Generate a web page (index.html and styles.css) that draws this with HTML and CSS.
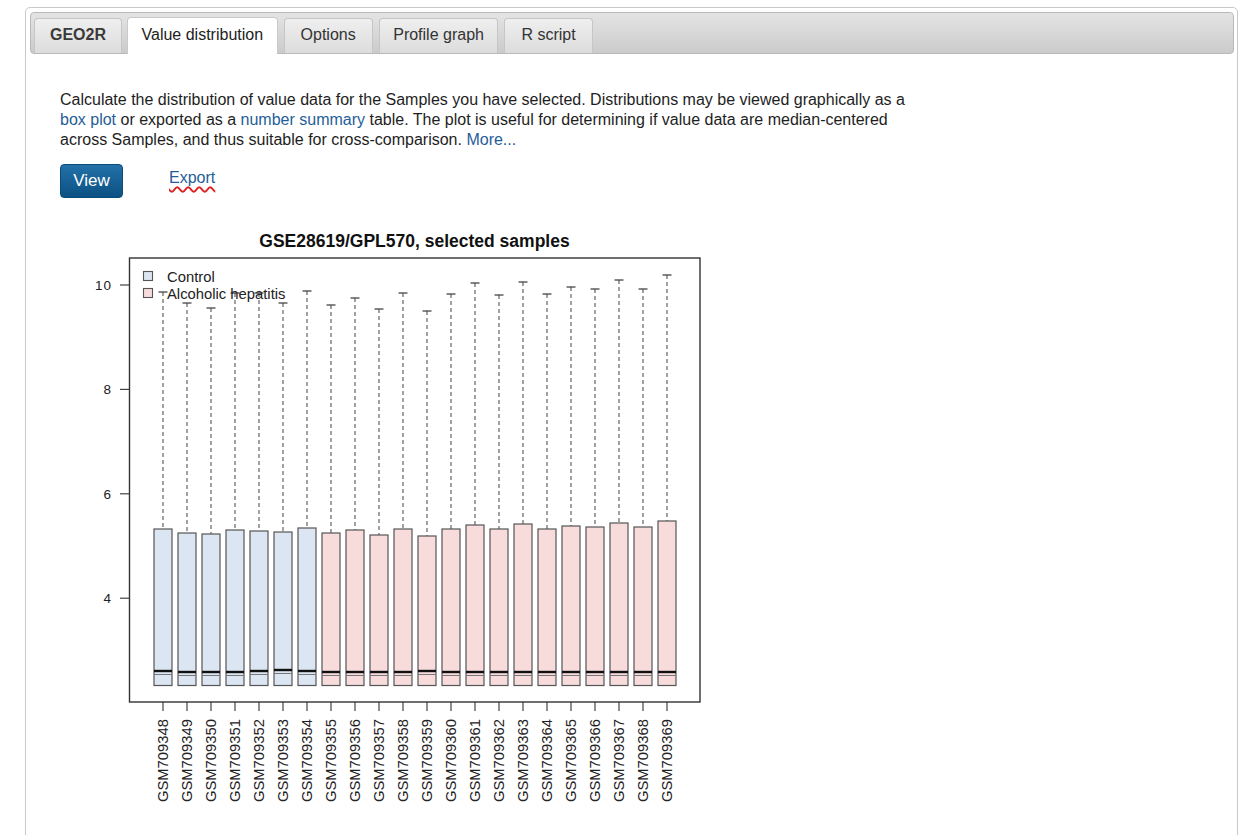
FILE: index.html
```html
<!DOCTYPE html>
<html>
<head>
<meta charset="utf-8">
<title>GEO2R - Value distribution</title>
<link rel="stylesheet" href="styles.css">
</head>
<body>
<div class="panel">
  <div class="tabbar">
    <div class="tab tab-bold">GEO2R</div>
    <div class="tab tab-active">Value distribution</div>
    <div class="tab tab-wide">Options</div>
    <div class="tab tab-mid">Profile graph</div>
    <div class="tab tab-wide">R script</div>
  </div>
  <div class="content">
    <p class="intro">Calculate the distribution of value data for the Samples you have selected. Distributions may be viewed graphically as a <a href="#">box plot</a> or exported as a <a href="#">number summary</a> table. The plot is useful for determining if value data are median-centered across Samples, and thus suitable for cross-comparison. <a href="#">More...</a></p>
    <div class="actions">
      <button class="btn-view">View</button>
      <a class="export" href="#">Export</a>
    </div>
    <svg class="chart" width="660" height="600" viewBox="60 222 660 600" xmlns="http://www.w3.org/2000/svg">
      <text class="title" x="414.5" y="246" text-anchor="middle">GSE28619/GPL570, selected samples</text>
      <!-- y axis -->
      <line class="axis" x1="120" x2="129" y1="284" y2="284"/>
      <line class="axis" x1="120" x2="129" y1="388.4" y2="388.4"/>
      <line class="axis" x1="120" x2="129" y1="492.8" y2="492.8"/>
      <line class="axis" x1="120" x2="129" y1="597.2" y2="597.2"/>
      <text class="yl" x="112" y="289">10</text>
      <text class="yl" x="112" y="393.4">8</text>
      <text class="yl" x="112" y="497.8">6</text>
      <text class="yl" x="112" y="602.2">4</text>

      <g transform="translate(163 0)"><line class="wh" y1="291" y2="528"/><line class="cap" x1="-4.5" x2="4.5" y1="291" y2="291"/><rect class="bx ctl" x="-9" y="528" width="18" height="156.5"/><line class="lq" x1="-9" x2="9" y1="673.5" y2="673.5"/><line class="med" x1="-9" x2="9" y1="670" y2="670"/><line class="tk" y1="701" y2="710"/><text class="xl" transform="translate(5 718) rotate(-90)">GSM709348</text></g>
      <g transform="translate(187 0)"><line class="wh" y1="302" y2="532"/><line class="cap" x1="-4.5" x2="4.5" y1="302" y2="302"/><rect class="bx ctl" x="-9" y="532" width="18" height="152.5"/><line class="lq" x1="-9" x2="9" y1="674.5" y2="674.5"/><line class="med" x1="-9" x2="9" y1="671" y2="671"/><line class="tk" y1="701" y2="710"/><text class="xl" transform="translate(5 718) rotate(-90)">GSM709349</text></g>
      <g transform="translate(211 0)"><line class="wh" y1="307" y2="533"/><line class="cap" x1="-4.5" x2="4.5" y1="307" y2="307"/><rect class="bx ctl" x="-9" y="533" width="18" height="151.5"/><line class="lq" x1="-9" x2="9" y1="674.5" y2="674.5"/><line class="med" x1="-9" x2="9" y1="671" y2="671"/><line class="tk" y1="701" y2="710"/><text class="xl" transform="translate(5 718) rotate(-90)">GSM709350</text></g>
      <g transform="translate(235 0)"><line class="wh" y1="292" y2="529"/><line class="cap" x1="-4.5" x2="4.5" y1="292" y2="292"/><rect class="bx ctl" x="-9" y="529" width="18" height="155.5"/><line class="lq" x1="-9" x2="9" y1="674.5" y2="674.5"/><line class="med" x1="-9" x2="9" y1="671" y2="671"/><line class="tk" y1="701" y2="710"/><text class="xl" transform="translate(5 718) rotate(-90)">GSM709351</text></g>
      <g transform="translate(259 0)"><line class="wh" y1="292" y2="530"/><line class="cap" x1="-4.5" x2="4.5" y1="292" y2="292"/><rect class="bx ctl" x="-9" y="530" width="18" height="154.5"/><line class="lq" x1="-9" x2="9" y1="673.5" y2="673.5"/><line class="med" x1="-9" x2="9" y1="670" y2="670"/><line class="tk" y1="701" y2="710"/><text class="xl" transform="translate(5 718) rotate(-90)">GSM709352</text></g>
      <g transform="translate(283 0)"><line class="wh" y1="302" y2="531"/><line class="cap" x1="-4.5" x2="4.5" y1="302" y2="302"/><rect class="bx ctl" x="-9" y="531" width="18" height="153.5"/><line class="lq" x1="-9" x2="9" y1="672.5" y2="672.5"/><line class="med" x1="-9" x2="9" y1="669" y2="669"/><line class="tk" y1="701" y2="710"/><text class="xl" transform="translate(5 718) rotate(-90)">GSM709353</text></g>
      <g transform="translate(307 0)"><line class="wh" y1="290" y2="527"/><line class="cap" x1="-4.5" x2="4.5" y1="290" y2="290"/><rect class="bx ctl" x="-9" y="527" width="18" height="157.5"/><line class="lq" x1="-9" x2="9" y1="673.5" y2="673.5"/><line class="med" x1="-9" x2="9" y1="670" y2="670"/><line class="tk" y1="701" y2="710"/><text class="xl" transform="translate(5 718) rotate(-90)">GSM709354</text></g>
      <g transform="translate(331 0)"><line class="wh" y1="304" y2="532"/><line class="cap" x1="-4.5" x2="4.5" y1="304" y2="304"/><rect class="bx ah" x="-9" y="532" width="18" height="152.5"/><line class="lq" x1="-9" x2="9" y1="674.5" y2="674.5"/><line class="med" x1="-9" x2="9" y1="671" y2="671"/><line class="tk" y1="701" y2="710"/><text class="xl" transform="translate(5 718) rotate(-90)">GSM709355</text></g>
      <g transform="translate(355 0)"><line class="wh" y1="297" y2="529"/><line class="cap" x1="-4.5" x2="4.5" y1="297" y2="297"/><rect class="bx ah" x="-9" y="529" width="18" height="155.5"/><line class="lq" x1="-9" x2="9" y1="674.5" y2="674.5"/><line class="med" x1="-9" x2="9" y1="671" y2="671"/><line class="tk" y1="701" y2="710"/><text class="xl" transform="translate(5 718) rotate(-90)">GSM709356</text></g>
      <g transform="translate(379 0)"><line class="wh" y1="308" y2="534"/><line class="cap" x1="-4.5" x2="4.5" y1="308" y2="308"/><rect class="bx ah" x="-9" y="534" width="18" height="150.5"/><line class="lq" x1="-9" x2="9" y1="674.5" y2="674.5"/><line class="med" x1="-9" x2="9" y1="671" y2="671"/><line class="tk" y1="701" y2="710"/><text class="xl" transform="translate(5 718) rotate(-90)">GSM709357</text></g>
      <g transform="translate(403 0)"><line class="wh" y1="292" y2="528"/><line class="cap" x1="-4.5" x2="4.5" y1="292" y2="292"/><rect class="bx ah" x="-9" y="528" width="18" height="156.5"/><line class="lq" x1="-9" x2="9" y1="674.5" y2="674.5"/><line class="med" x1="-9" x2="9" y1="671" y2="671"/><line class="tk" y1="701" y2="710"/><text class="xl" transform="translate(5 718) rotate(-90)">GSM709358</text></g>
      <g transform="translate(427 0)"><line class="wh" y1="310" y2="535"/><line class="cap" x1="-4.5" x2="4.5" y1="310" y2="310"/><rect class="bx ah" x="-9" y="535" width="18" height="149.5"/><line class="lq" x1="-9" x2="9" y1="673.5" y2="673.5"/><line class="med" x1="-9" x2="9" y1="670" y2="670"/><line class="tk" y1="701" y2="710"/><text class="xl" transform="translate(5 718) rotate(-90)">GSM709359</text></g>
      <g transform="translate(451 0)"><line class="wh" y1="293" y2="528"/><line class="cap" x1="-4.5" x2="4.5" y1="293" y2="293"/><rect class="bx ah" x="-9" y="528" width="18" height="156.5"/><line class="lq" x1="-9" x2="9" y1="674.5" y2="674.5"/><line class="med" x1="-9" x2="9" y1="671" y2="671"/><line class="tk" y1="701" y2="710"/><text class="xl" transform="translate(5 718) rotate(-90)">GSM709360</text></g>
      <g transform="translate(475 0)"><line class="wh" y1="282" y2="524"/><line class="cap" x1="-4.5" x2="4.5" y1="282" y2="282"/><rect class="bx ah" x="-9" y="524" width="18" height="160.5"/><line class="lq" x1="-9" x2="9" y1="674.5" y2="674.5"/><line class="med" x1="-9" x2="9" y1="671" y2="671"/><line class="tk" y1="701" y2="710"/><text class="xl" transform="translate(5 718) rotate(-90)">GSM709361</text></g>
      <g transform="translate(499 0)"><line class="wh" y1="294" y2="528"/><line class="cap" x1="-4.5" x2="4.5" y1="294" y2="294"/><rect class="bx ah" x="-9" y="528" width="18" height="156.5"/><line class="lq" x1="-9" x2="9" y1="674.5" y2="674.5"/><line class="med" x1="-9" x2="9" y1="671" y2="671"/><line class="tk" y1="701" y2="710"/><text class="xl" transform="translate(5 718) rotate(-90)">GSM709362</text></g>
      <g transform="translate(523 0)"><line class="wh" y1="281" y2="523"/><line class="cap" x1="-4.5" x2="4.5" y1="281" y2="281"/><rect class="bx ah" x="-9" y="523" width="18" height="161.5"/><line class="lq" x1="-9" x2="9" y1="674.5" y2="674.5"/><line class="med" x1="-9" x2="9" y1="671" y2="671"/><line class="tk" y1="701" y2="710"/><text class="xl" transform="translate(5 718) rotate(-90)">GSM709363</text></g>
      <g transform="translate(547 0)"><line class="wh" y1="293" y2="528"/><line class="cap" x1="-4.5" x2="4.5" y1="293" y2="293"/><rect class="bx ah" x="-9" y="528" width="18" height="156.5"/><line class="lq" x1="-9" x2="9" y1="674.5" y2="674.5"/><line class="med" x1="-9" x2="9" y1="671" y2="671"/><line class="tk" y1="701" y2="710"/><text class="xl" transform="translate(5 718) rotate(-90)">GSM709364</text></g>
      <g transform="translate(571 0)"><line class="wh" y1="286" y2="525"/><line class="cap" x1="-4.5" x2="4.5" y1="286" y2="286"/><rect class="bx ah" x="-9" y="525" width="18" height="159.5"/><line class="lq" x1="-9" x2="9" y1="674.5" y2="674.5"/><line class="med" x1="-9" x2="9" y1="671" y2="671"/><line class="tk" y1="701" y2="710"/><text class="xl" transform="translate(5 718) rotate(-90)">GSM709365</text></g>
      <g transform="translate(595 0)"><line class="wh" y1="288" y2="526"/><line class="cap" x1="-4.5" x2="4.5" y1="288" y2="288"/><rect class="bx ah" x="-9" y="526" width="18" height="158.5"/><line class="lq" x1="-9" x2="9" y1="674.5" y2="674.5"/><line class="med" x1="-9" x2="9" y1="671" y2="671"/><line class="tk" y1="701" y2="710"/><text class="xl" transform="translate(5 718) rotate(-90)">GSM709366</text></g>
      <g transform="translate(619 0)"><line class="wh" y1="279" y2="522"/><line class="cap" x1="-4.5" x2="4.5" y1="279" y2="279"/><rect class="bx ah" x="-9" y="522" width="18" height="162.5"/><line class="lq" x1="-9" x2="9" y1="674.5" y2="674.5"/><line class="med" x1="-9" x2="9" y1="671" y2="671"/><line class="tk" y1="701" y2="710"/><text class="xl" transform="translate(5 718) rotate(-90)">GSM709367</text></g>
      <g transform="translate(643 0)"><line class="wh" y1="288" y2="526"/><line class="cap" x1="-4.5" x2="4.5" y1="288" y2="288"/><rect class="bx ah" x="-9" y="526" width="18" height="158.5"/><line class="lq" x1="-9" x2="9" y1="674.5" y2="674.5"/><line class="med" x1="-9" x2="9" y1="671" y2="671"/><line class="tk" y1="701" y2="710"/><text class="xl" transform="translate(5 718) rotate(-90)">GSM709368</text></g>
      <g transform="translate(667 0)"><line class="wh" y1="274" y2="520"/><line class="cap" x1="-4.5" x2="4.5" y1="274" y2="274"/><rect class="bx ah" x="-9" y="520" width="18" height="164.5"/><line class="lq" x1="-9" x2="9" y1="674.5" y2="674.5"/><line class="med" x1="-9" x2="9" y1="671" y2="671"/><line class="tk" y1="701" y2="710"/><text class="xl" transform="translate(5 718) rotate(-90)">GSM709369</text></g>

      <!-- legend -->
      <rect class="lg ctl" x="143.5" y="270.5" width="9" height="9"/>
      <text class="lt" x="167" y="281">Control</text>
      <rect class="lg ah" x="143.5" y="287.5" width="9" height="9"/>
      <text class="lt" x="167" y="298">Alcoholic hepatitis</text>

      <rect class="frame" x="129.5" y="257" width="570.5" height="444"/>
    </svg>
  </div>
</div>
</body>
</html>
```

FILE: styles.css
```css
html, body {
  margin: 0;
  padding: 0;
  background: #ffffff;
}

body {
  font-family: "Liberation Sans", Arial, Helvetica, sans-serif;
  color: #222;
}

.panel {
  box-sizing: border-box;
  width: 1213px;
  min-height: 880px;
  margin: 7px 0 0 25px;
  padding: 4px 3px 0 4px;
  border: 1px solid #c9c9c9;
  border-radius: 5px;
}

.tabbar {
  box-sizing: border-box;
  height: 42px;
  display: flex;
  align-items: flex-end;
  gap: 6px;
  padding-left: 3px;
  background: linear-gradient(#e4e4e4, #cbcbcb);
  border: 1px solid #b9b9b9;
  border-radius: 4px;
}

.tab {
  box-sizing: border-box;
  height: 35px;
  padding: 0 15px 2px;
  display: flex;
  align-items: center;
  font-size: 16px;
  color: #333;
  background: linear-gradient(#efefef, #dcdcdc);
  border: 1px solid #c6c6c6;
  border-bottom: none;
  border-radius: 4px 4px 0 0;
}

.tab-bold {
  font-weight: bold;
  color: #3a3a3a;
}

.tab-wide {
  padding: 0 16px 2px;
}

.tab-mid {
  padding: 0 13.5px 2px;
}

.tab-active {
  height: 37px;
  margin-bottom: -1px;
  margin-left: -1px;
  padding: 0 13.5px 3px;
  background: #ffffff;
  color: #222;
  border-color: #c9c9c9;
}

.content {
  padding: 36px 30px 0 30px;
}

.intro {
  margin: 0;
  max-width: 860px;
  font-size: 16px;
  line-height: 20px;
  color: #1e1e1e;
}

.intro a {
  color: #1f5e98;
  text-decoration: none;
}

.actions {
  display: flex;
  align-items: center;
  margin-top: 14px;
  height: 34px;
}

.btn-view {
  box-sizing: border-box;
  width: 63px;
  height: 34px;
  border: 1px solid #0b4a79;
  border-radius: 4px;
  background: linear-gradient(#2271a8, #0c5183);
  color: #fff;
  font-family: "Liberation Sans", Arial, sans-serif;
  font-size: 17px;
  padding: 0;
}

.export {
  margin-left: 46px;
  margin-top: -6px;
  font-size: 16px;
  color: #1f5e98;
  text-decoration: underline wavy #e02020;
  text-decoration-thickness: 1.5px;
  text-decoration-skip-ink: none;
  text-underline-offset: 3px;
}

.chart {
  display: block;
  margin-top: 25px;
  font-family: "Liberation Sans", Arial, Helvetica, sans-serif;
}

.chart .title {
  font-size: 17.5px;
  font-weight: bold;
  fill: #111;
}

.chart .axis,
.chart .tk {
  stroke: #444;
  stroke-width: 1.2;
}

.chart .yl {
  font-size: 13.5px;
  fill: #222;
  text-anchor: end;
  letter-spacing: 1px;
}

.chart .wh {
  stroke: #555;
  stroke-width: 1.1;
  stroke-dasharray: 4 3;
}

.chart .cap {
  stroke: #444;
  stroke-width: 1.3;
}

.chart .bx {
  stroke: #555;
  stroke-width: 1.2;
}

.chart .ctl {
  fill: #dbe6f2;
}

.chart .ah {
  fill: #f8dcdc;
}

.chart .med {
  stroke: #111;
  stroke-width: 2.4;
}

.chart .lq {
  stroke: #777;
  stroke-width: 1;
}

.chart .xl {
  font-size: 14.8px;
  fill: #222;
  text-anchor: end;
}

.chart .lg {
  stroke: #555;
  stroke-width: 1.1;
}

.chart .lt {
  font-size: 14.8px;
  fill: #222;
}

.chart .frame {
  fill: none;
  stroke: #333;
  stroke-width: 1.4;
}
```
